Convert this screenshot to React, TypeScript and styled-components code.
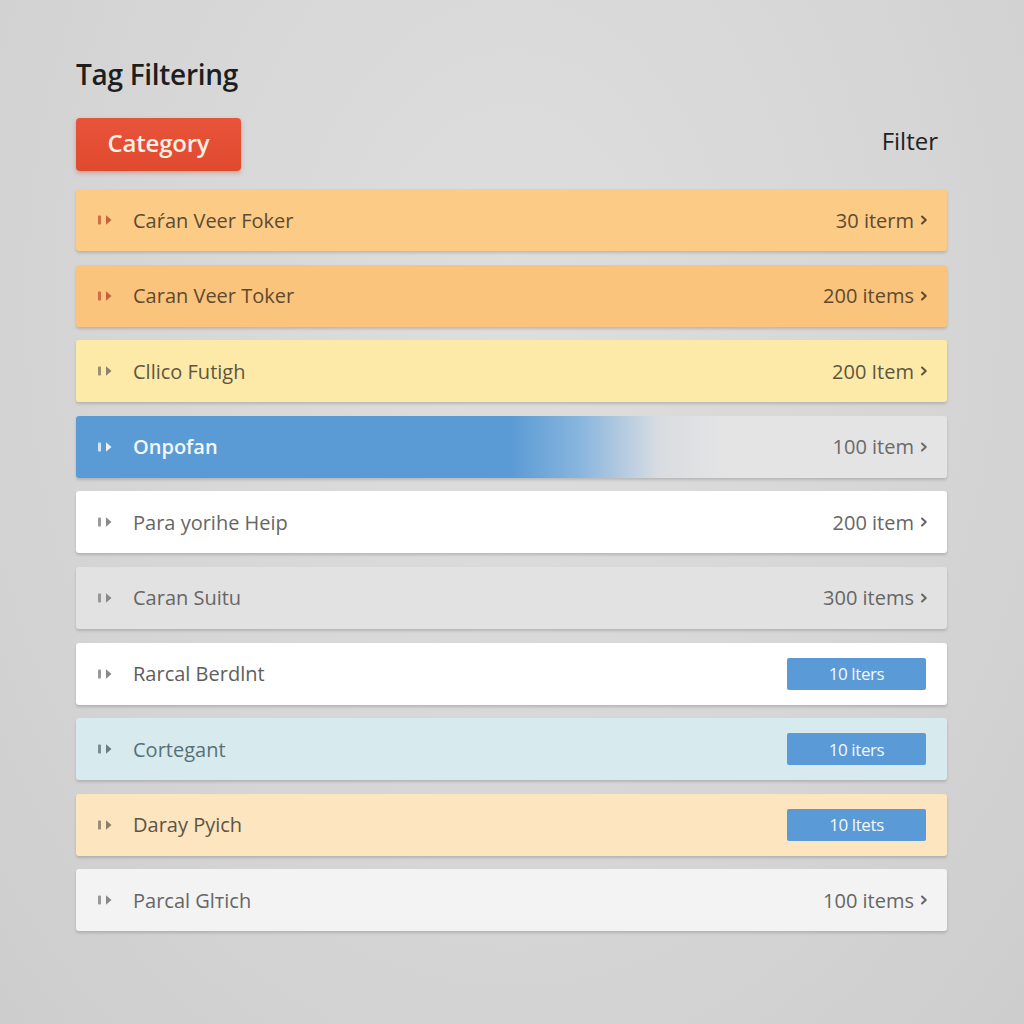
import React from "react";
import styled, { createGlobalStyle } from "styled-components";

const Global = createGlobalStyle`
  html, body { margin: 0; padding: 0; }
  body {
    width: 1024px;
    height: 1024px;
    background: radial-gradient(ellipse at 50% 30%, #dedede 0%, #d6d6d6 55%, #cdcdcd 100%);
    font-family: "Open Sans", "Noto Sans", sans-serif;
  }
`;

const Page = styled.div`
  box-sizing: border-box;
  width: 1024px;
  height: 1024px;
  padding: 55px 77px 0 76px;
  display: flex;
  flex-direction: column;
`;

const Title = styled.h1`
  margin: 0;
  font-size: 28px;
  font-weight: 600;
  color: #1e1e1e;
  line-height: 38px;
  letter-spacing: -0.3px;
`;

const Toolbar = styled.div`
  display: flex;
  justify-content: space-between;
  align-items: center;
  margin-top: 25px;
  margin-bottom: 18px;
`;

const CategoryButton = styled.button`
  width: 165px;
  height: 53px;
  border: none;
  border-radius: 4px;
  background: linear-gradient(180deg, #e8543a 0%, #e04a2e 100%);
  box-shadow: 0 2px 4px rgba(180, 60, 30, 0.35);
  color: #fbeee4;
  font-family: inherit;
  font-size: 24px;
  font-weight: 600;
  letter-spacing: -0.2px;
  padding: 0 0 4px;
`;

const FilterLabel = styled.div`
  font-size: 24px;
  font-weight: 500;
  color: #222;
  margin-right: 9px;
  margin-top: -8px;
`;

const List = styled.div`
  display: flex;
  flex-direction: column;
  gap: 13.6px;
`;

const Row = styled.div<{ $bg: string }>`
  height: 62px;
  box-sizing: border-box;
  display: flex;
  align-items: center;
  padding: 0 19px 0 21px;
  background: ${(p) => p.$bg};
  border-radius: 3px;
  box-shadow: 0 2px 3px rgba(0, 0, 0, 0.16);
`;

const Handle = styled.span<{ $color: string }>`
  display: flex;
  align-items: center;
  width: 36px;
  flex-shrink: 0;
  color: ${(p) => p.$color};
`;

const Label = styled.span<{ $color: string; $bold?: boolean }>`
  flex: 1;
  font-size: 20px;
  color: ${(p) => p.$color};
  font-weight: ${(p) => (p.$bold ? 600 : 400)};
`;

const Count = styled.span<{ $color: string }>`
  display: flex;
  align-items: center;
  gap: 6px;
  font-size: 20px;
  color: ${(p) => p.$color};
`;

const Badge = styled.span`
  width: 139px;
  height: 32px;
  margin-right: 2px;
  display: flex;
  align-items: center;
  justify-content: center;
  background: #5a9ad6;
  border-radius: 2px;
  color: #f3f8fd;
  font-size: 17px;
  letter-spacing: -0.4px;
`;

const HandleIcon = () => (
  <svg width="18" height="14" viewBox="0 0 18 14">
    <rect x="1" y="2.5" width="3" height="9" rx="0.7" fill="currentColor" opacity="0.85" />
    <path d="M9 2.2 L14.5 7 L9 11.8 Z" fill="currentColor" />
  </svg>
);

const Chevron = () => (
  <svg width="8" height="12" viewBox="0 0 8 12">
    <path d="M2 2.5 L5.8 6 L2 9.5" fill="none" stroke="currentColor" strokeWidth="2" strokeLinecap="round" strokeLinejoin="round" />
  </svg>
);

type Item = {
  name: string;
  bg: string;
  text: string;
  icon: string;
  count?: string;
  countColor?: string;
  badge?: string;
  bold?: boolean;
};

const items: Item[] = [
  { name: "Caŕan Veer Foker", bg: "#fccb86", text: "#5e4a30", icon: "#c8603c", count: "30 iterm", countColor: "#5e4a30" },
  { name: "Caran Veer Toker", bg: "#fbc47c", text: "#5e4a30", icon: "#c2603c", count: "200 items", countColor: "#5e4a30" },
  { name: "Cllico Futigh", bg: "#fdeaa8", text: "#5e5640", icon: "#8a826a", count: "200 Item", countColor: "#5e5640" },
  {
    name: "Onpofan",
    bg: "linear-gradient(90deg, #5b9bd5 0%, #5b9bd5 50%, #8ab6de 58%, #d9dde1 67%, #e4e4e4 75%, #e4e4e4 100%)",
    text: "#f4f8fc",
    icon: "#eaf2fa",
    count: "100 item",
    countColor: "#6a6a6a",
    bold: true,
  },
  { name: "Para yorihe Heip", bg: "#ffffff", text: "#666666", icon: "#8a8a8a", count: "200 item", countColor: "#666666" },
  { name: "Caran Suitu", bg: "#e2e2e2", text: "#666666", icon: "#888888", count: "300 items", countColor: "#666666" },
  { name: "Rarcal Berdlnt", bg: "#ffffff", text: "#5e5e5e", icon: "#888888", badge: "10 lters" },
  { name: "Cortegant", bg: "#d7eaee", text: "#587078", icon: "#6a7c82", badge: "10 iters" },
  { name: "Daray Pyich", bg: "#fce5bf", text: "#5e5444", icon: "#8a7e6a", badge: "10 ltets" },
  { name: "Parcal Glтich", bg: "#f3f3f3", text: "#666666", icon: "#888888", count: "100 items", countColor: "#666666" },
];

export default function App() {
  return (
    <>
      <Global />
      <Page>
        <Title>Tag Filtering</Title>
        <Toolbar>
          <CategoryButton>Category</CategoryButton>
          <FilterLabel>Filter</FilterLabel>
        </Toolbar>
        <List>
          {items.map((it) => (
            <Row key={it.name} $bg={it.bg}>
              <Handle $color={it.icon}>
                <HandleIcon />
              </Handle>
              <Label $color={it.text} $bold={it.bold}>
                {it.name}
              </Label>
              {it.badge ? (
                <Badge>{it.badge}</Badge>
              ) : (
                <Count $color={it.countColor || "#666"}>
                  {it.count}
                  <Chevron />
                </Count>
              )}
            </Row>
          ))}
        </List>
      </Page>
    </>
  );
}
